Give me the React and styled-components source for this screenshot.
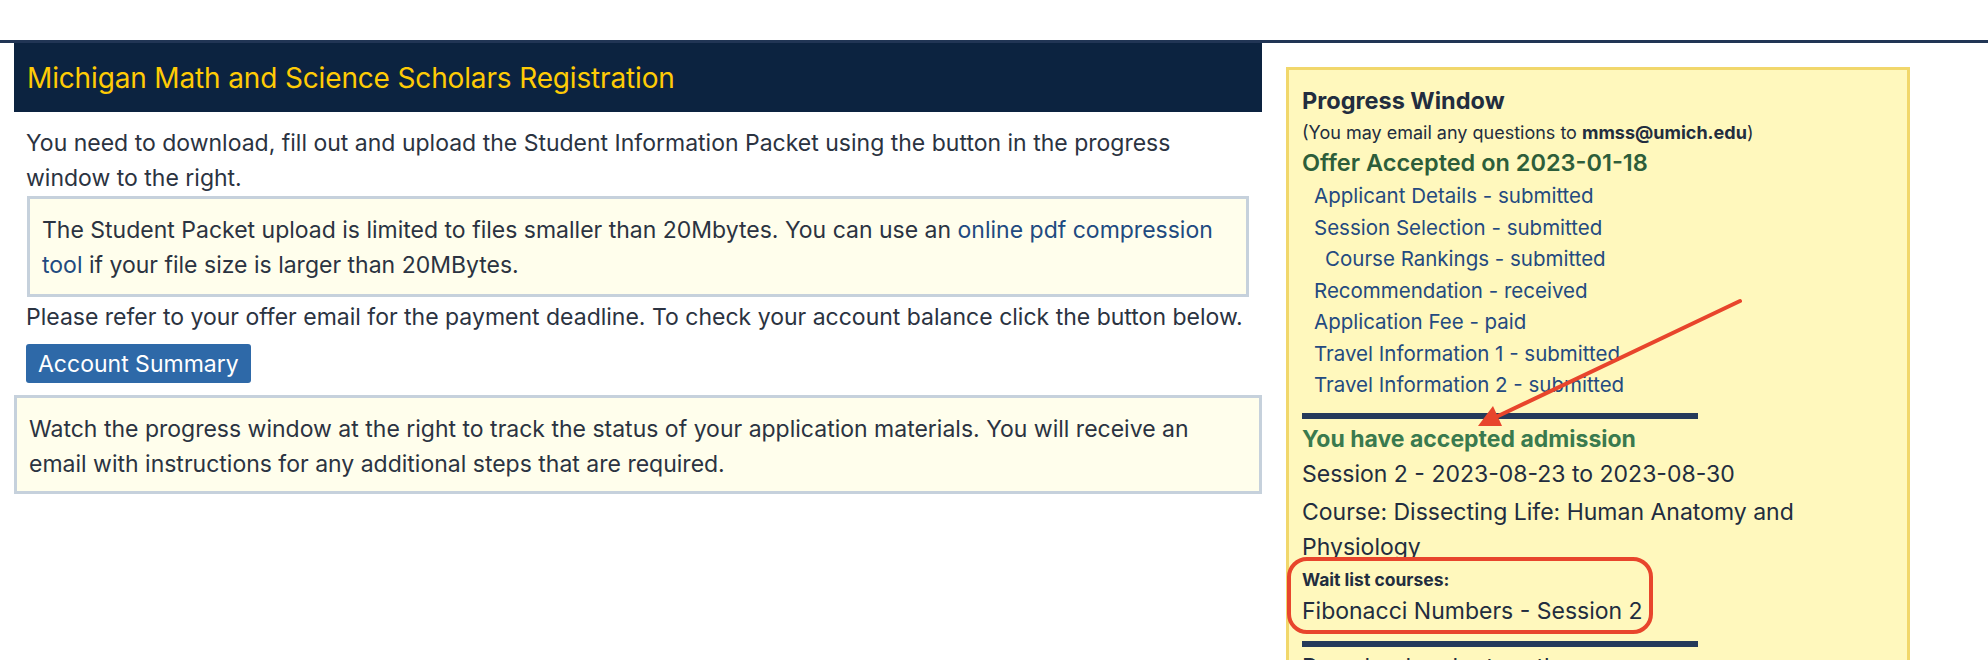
import React from 'react';
import styled, { createGlobalStyle } from 'styled-components';

const GlobalStyle = createGlobalStyle`
  html, body {
    margin: 0;
    padding: 0;
    background: #fff;
    overflow: hidden;
  }

  body {
    font-family: Inter, "Noto Sans", sans-serif;
    color: #2b3341;
  }
`;

const statusItems = [
  { text: 'Applicant Details - submitted' },
  { text: 'Session Selection - submitted' },
  { text: 'Course Rankings - submitted', sub: true },
  { text: 'Recommendation - received' },
  { text: 'Application Fee - paid' },
  { text: 'Travel Information 1 - submitted' },
  { text: 'Travel Information 2 - submitted' },
];

function App() {
  return (
    <>
      <GlobalStyle />
      <TopBar />
      <Page>
        <Main>
          <Header>
            <Title>Michigan Math and Science Scholars Registration</Title>
          </Header>
          <Para>
            You need to download, fill out and upload the Student Information Packet using the button in the progress
            window to the right.
          </Para>
          <Notice $inset>
            The Student Packet upload is limited to files smaller than 20Mbytes. You can use an{' '}
            <TextLink href="#">online pdf compression tool</TextLink> if your file size is larger than 20MBytes.
          </Notice>
          <Para $tight>
            Please refer to your offer email for the payment deadline. To check your account balance click the button below.
          </Para>
          <Button type="button">Account Summary</Button>
          <Notice>
            Watch the progress window at the right to track the status of your application materials. You will receive an
            email with instructions for any additional steps that are required.
          </Notice>
        </Main>

        <Panel>
          <PanelTitle>Progress Window</PanelTitle>
          <EmailNote>
            (You may email any questions to <strong>mmss@umich.edu</strong>)
          </EmailNote>
          <OfferHeading>Offer Accepted on 2023-01-18</OfferHeading>
          <StatusList>
            {statusItems.map((item) => (
              <StatusItem key={item.text} $sub={item.sub}>{item.text}</StatusItem>
            ))}
          </StatusList>
          <Divider $top={12} />
          <Accepted>You have accepted admission</Accepted>
          <Detail $lh={36} $top={1}>Session 2 - 2023-08-23 to 2023-08-30</Detail>
          <Detail $lh={35.5} $top={3}>Course: Dissecting Life: Human Anatomy and Physiology</Detail>
          <WaitLabel>Wait list courses:</WaitLabel>
          <Detail $lh={34} $top={1}>Fibonacci Numbers - Session 2</Detail>
          <Divider $top={13} />
          <Detail $lh={36} $top={2}>Download and return the</Detail>

          <Highlight />
          <Arrow viewBox="0 0 290 150" width="290" height="150">
            <line x1="271" y1="12" x2="27" y2="128" stroke="#e8452c" strokeWidth="4" strokeLinecap="round" />
            <polygon points="9,137 33,137 24,117" fill="#e8452c" />
          </Arrow>
        </Panel>
      </Page>
    </>
  );
}

const TopBar = styled.div`
  height: 40px;
  border-bottom: 3px solid #213555;
`;

const Page = styled.div`
  display: flex;
  align-items: flex-start;
  gap: 24px;
  padding-left: 14px;
`;

const Main = styled.div`
  width: 1248px;
  flex-shrink: 0;
`;

const Header = styled.div`
  height: 69px;
  display: flex;
  align-items: center;
  padding: 0 13px;
  background: #0c2340;
`;

const Title = styled.h1`
  margin: 0;
  font-size: 28px;
  font-weight: 400;
  color: #ffcb05;
  letter-spacing: -0.15px;
`;

const Para = styled.p`
  margin: ${(p) => (p.$tight ? '3px 12px 0' : '14px 12px 0')};
  font-size: 23px;
  line-height: 35px;
`;

const Notice = styled.div`
  margin: ${(p) => (p.$inset ? '0 13px' : '12px 0 0')};
  padding: 14px 12px ${(p) => (p.$inset ? '11px' : '9px')};
  border: 3px solid #c6d1dc;
  background: #fffeec;
  font-size: 23px;
  line-height: 35px;
`;

const TextLink = styled.a`
  color: #214a80;
  text-decoration: none;
`;

const Button = styled.button`
  display: block;
  margin: 9px 12px 0;
  height: 39px;
  padding: 0 12px;
  border: none;
  border-radius: 3px;
  background: #2e69a8;
  color: #fff;
  font-family: inherit;
  font-size: 23px;
`;

const Panel = styled.div`
  position: relative;
  width: 624px;
  min-height: 700px;
  box-sizing: border-box;
  flex-shrink: 0;
  margin-top: 24px;
  padding: 15px 13px 0;
  border: 3px solid #f1d76b;
  background: #fff8bd;
  color: #222d3f;
`;

const PanelTitle = styled.div`
  font-size: 23.5px;
  font-weight: 700;
  line-height: 32px;
`;

const EmailNote = styled.div`
  font-size: 18px;
  line-height: 31px;

  strong {
    font-weight: 700;
  }
`;

const OfferHeading = styled.div`
  font-size: 23.5px;
  font-weight: 600;
  line-height: 30px;
  color: #2d5e3a;
`;

const StatusList = styled.div`
  margin-top: 2px;
`;

const StatusItem = styled.div`
  padding-left: ${(p) => (p.$sub ? '23px' : '12px')};
  font-size: 20.5px;
  line-height: 31.5px;
  color: #244a80;
`;

const Divider = styled.div`
  width: 396px;
  height: 6px;
  margin-top: ${(p) => p.$top}px;
  background: #253a5a;
`;

const Accepted = styled.div`
  margin-top: 4px;
  font-size: 23px;
  font-weight: 700;
  line-height: 32px;
  color: #3a7a4e;
`;

const Detail = styled.div`
  margin-top: ${(p) => p.$top || 0}px;
  font-size: 23px;
  line-height: ${(p) => p.$lh}px;
`;

const WaitLabel = styled.div`
  margin-top: 1px;
  font-size: 17.5px;
  font-weight: 700;
  line-height: 26px;
`;

const Highlight = styled.div`
  position: absolute;
  left: -2px;
  top: 487px;
  width: 366px;
  height: 77px;
  box-sizing: border-box;
  border: 4px solid #e8452c;
  border-radius: 20px;
  pointer-events: none;
`;

const Arrow = styled.svg`
  position: absolute;
  left: 180px;
  top: 219px;
  overflow: visible;
  pointer-events: none;
`;

export default App;
